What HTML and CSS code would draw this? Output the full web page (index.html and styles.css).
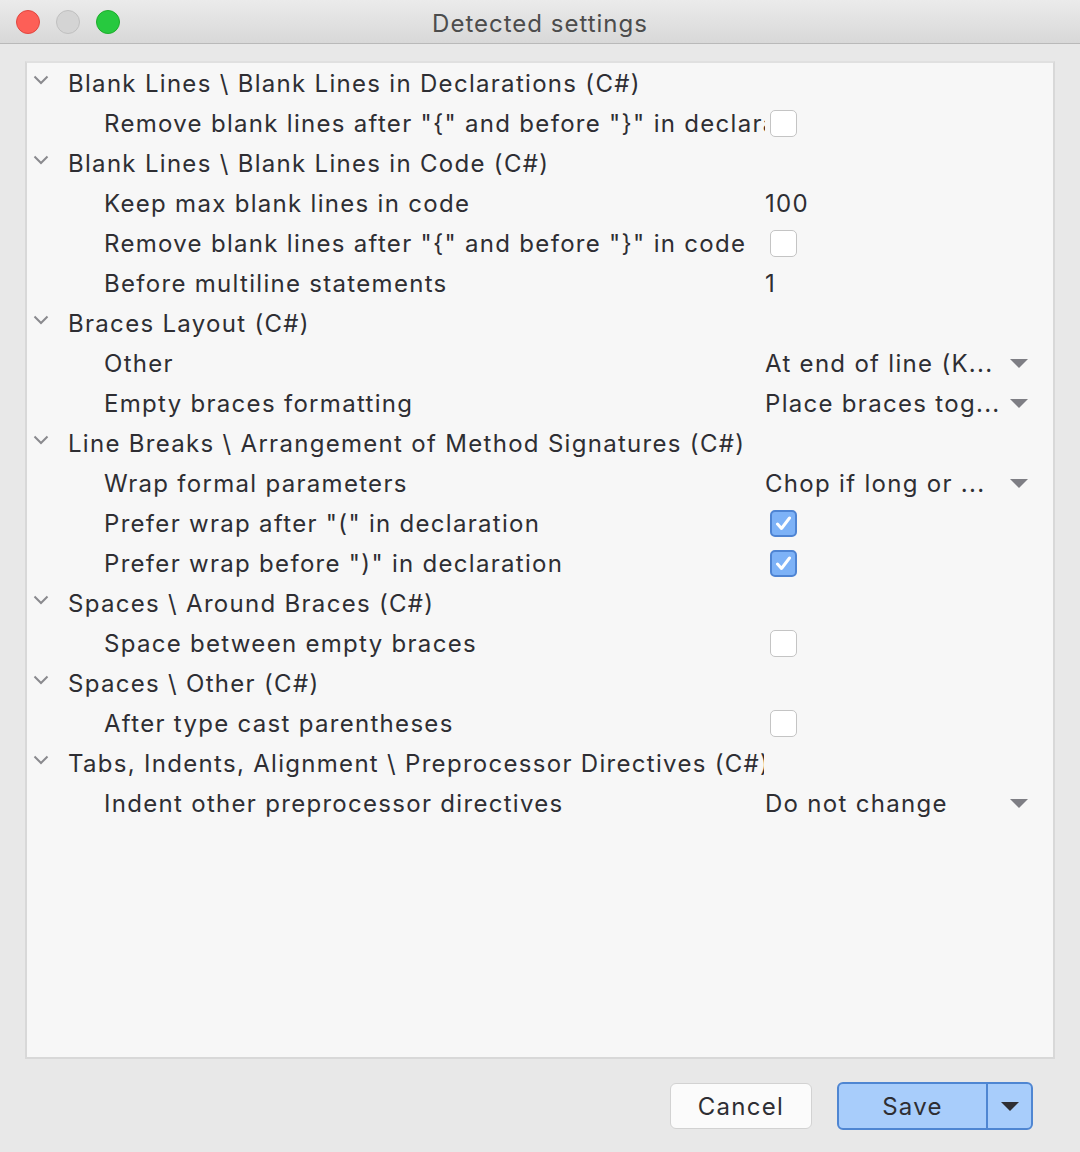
FILE: index.html
```html
<!DOCTYPE html>
<html>
<head>
<meta charset="utf-8">
<link rel="stylesheet" href="styles.css">
</head>
<body>
<div class="window">
  <div class="titlebar">
    <div class="lights">
      <span class="light red"></span>
      <span class="light gray"></span>
      <span class="light green"></span>
    </div>
    <div class="title">Detected settings</div>
  </div>
  <div class="content">
    <div class="panel">
      <div class="row group"><span class="chev"><svg width="16" height="10" viewBox="0 0 16 10"><path d="M1.5 1.5 L8 8 L14.5 1.5" fill="none" stroke="#8a8a8e" stroke-width="2"/></svg></span><span class="label">Blank Lines \ Blank Lines in Declarations (C#)</span></div>
      <div class="row item"><span class="label">Remove blank lines after "{" and before "}" in declarations</span><span class="value"><span class="cb"></span></span></div>

      <div class="row group"><span class="chev"><svg width="16" height="10" viewBox="0 0 16 10"><path d="M1.5 1.5 L8 8 L14.5 1.5" fill="none" stroke="#8a8a8e" stroke-width="2"/></svg></span><span class="label">Blank Lines \ Blank Lines in Code (C#)</span></div>
      <div class="row item"><span class="label">Keep max blank lines in code</span><span class="value">100</span></div>
      <div class="row item"><span class="label">Remove blank lines after "{" and before "}" in code</span><span class="value"><span class="cb"></span></span></div>
      <div class="row item"><span class="label">Before multiline statements</span><span class="value">1</span></div>

      <div class="row group"><span class="chev"><svg width="16" height="10" viewBox="0 0 16 10"><path d="M1.5 1.5 L8 8 L14.5 1.5" fill="none" stroke="#8a8a8e" stroke-width="2"/></svg></span><span class="label">Braces Layout (C#)</span></div>
      <div class="row item"><span class="label">Other</span><span class="value combo"><span class="ctext">At end of line (K...</span><span class="arrow"></span></span></div>
      <div class="row item"><span class="label">Empty braces formatting</span><span class="value combo"><span class="ctext">Place braces tog...</span><span class="arrow"></span></span></div>

      <div class="row group"><span class="chev"><svg width="16" height="10" viewBox="0 0 16 10"><path d="M1.5 1.5 L8 8 L14.5 1.5" fill="none" stroke="#8a8a8e" stroke-width="2"/></svg></span><span class="label">Line Breaks \ Arrangement of Method Signatures (C#)</span></div>
      <div class="row item"><span class="label">Wrap formal parameters</span><span class="value combo"><span class="ctext">Chop if long or ...</span><span class="arrow"></span></span></div>
      <div class="row item"><span class="label">Prefer wrap after "(" in declaration</span><span class="value"><span class="cb checked"><svg width="17" height="15" viewBox="0 0 17 15"><path d="M2.5 8 L6.5 12.5 L14.5 2" fill="none" stroke="#fff" stroke-width="3" stroke-linecap="round" stroke-linejoin="round"/></svg></span></span></div>
      <div class="row item"><span class="label">Prefer wrap before ")" in declaration</span><span class="value"><span class="cb checked"><svg width="17" height="15" viewBox="0 0 17 15"><path d="M2.5 8 L6.5 12.5 L14.5 2" fill="none" stroke="#fff" stroke-width="3" stroke-linecap="round" stroke-linejoin="round"/></svg></span></span></div>

      <div class="row group"><span class="chev"><svg width="16" height="10" viewBox="0 0 16 10"><path d="M1.5 1.5 L8 8 L14.5 1.5" fill="none" stroke="#8a8a8e" stroke-width="2"/></svg></span><span class="label">Spaces \ Around Braces (C#)</span></div>
      <div class="row item"><span class="label">Space between empty braces</span><span class="value"><span class="cb"></span></span></div>

      <div class="row group"><span class="chev"><svg width="16" height="10" viewBox="0 0 16 10"><path d="M1.5 1.5 L8 8 L14.5 1.5" fill="none" stroke="#8a8a8e" stroke-width="2"/></svg></span><span class="label">Spaces \ Other (C#)</span></div>
      <div class="row item"><span class="label">After type cast parentheses</span><span class="value"><span class="cb"></span></span></div>

      <div class="row group"><span class="chev"><svg width="16" height="10" viewBox="0 0 16 10"><path d="M1.5 1.5 L8 8 L14.5 1.5" fill="none" stroke="#8a8a8e" stroke-width="2"/></svg></span><span class="label">Tabs, Indents, Alignment \ Preprocessor Directives (C#)</span></div>
      <div class="row item"><span class="label">Indent other preprocessor directives</span><span class="value combo"><span class="ctext">Do not change</span><span class="arrow"></span></span></div>
    </div>
    <div class="buttons">
      <button class="btn cancel">Cancel</button>
      <div class="split">
        <button class="btn save">Save</button>
        <button class="btn drop"><span class="darrow"></span></button>
      </div>
    </div>
  </div>
</div>
</body>
</html>
```

FILE: styles.css
```css
* { box-sizing: border-box; }
html, body {
  margin: 0;
  padding: 0;
  background: #e8e8e8;
}
body {
  font-family: Inter, "Noto Sans", "Liberation Sans", sans-serif;
  color: #2e2e33;
}
.window {
  width: 1080px;
  height: 1152px;
  display: flex;
  flex-direction: column;
  background: #e8e8e8;
}
.titlebar {
  height: 44px;
  flex: none;
  position: relative;
  display: flex;
  align-items: center;
  justify-content: center;
  background: linear-gradient(#ebebeb, #d8d8d8);
  border-bottom: 1px solid #b9b9b9;
}
.lights {
  position: absolute;
  left: 16px;
  top: 10px;
  display: flex;
  gap: 16px;
}
.light {
  width: 24px;
  height: 24px;
  border-radius: 50%;
  display: block;
}
.red { background: #fd5f57; border: 1px solid #e1463f; }
.gray { background: #d4d4d4; border: 1px solid #c0c0c0; }
.green { background: #27c93f; border: 1px solid #1dad2b; }
.title {
  font-size: 24px;
  color: #4c4c4c;
  letter-spacing: 1px;
  position: relative;
  top: 2px;
}
.content {
  flex: 1;
  display: flex;
  flex-direction: column;
  padding: 17px 25px 0 25px;
}
.panel {
  height: 998px;
  background: #f7f7f7;
  border: 2px solid #d8d8d8;
  border-top-color: #e0e0e0;
  display: flex;
  flex-direction: column;
}
.row {
  height: 40px;
  flex: none;
  display: flex;
  align-items: center;
  font-size: 24px;
  letter-spacing: 1.3px;
  white-space: nowrap;
}
.group .chev {
  width: 16px;
  margin-left: 6px;
  margin-right: 19px;
  display: flex;
  align-items: center;
  position: relative;
  top: -3px;
}
.group .label {
  width: 696px;
  overflow: hidden;
}
.item .label {
  margin-left: 77px;
  width: 661px;
  overflow: hidden;
}
.value {
  display: flex;
  align-items: center;
  width: 263px;
}
.cb {
  width: 27px;
  height: 27px;
  margin-left: 5px;
  border: 1.5px solid #c4c4c4;
  border-radius: 5px;
  background: #fff;
  display: flex;
  align-items: center;
  justify-content: center;
}
.cb.checked {
  background: #7db2f7;
  border: 2px solid #4e84d3;
}
.combo {
  justify-content: space-between;
}
.ctext {
  overflow: hidden;
}
.arrow {
  flex: none;
  width: 0;
  height: 0;
  border-left: 9px solid transparent;
  border-right: 9px solid transparent;
  border-top: 9px solid #7e7e84;
}
.buttons {
  display: flex;
  justify-content: flex-end;
  align-items: center;
  gap: 25px;
  padding-top: 23px;
  padding-right: 22px;
}
.btn {
  font-family: inherit;
  font-size: 24px;
  letter-spacing: 1.3px;
  color: #2e2e33;
  margin: 0;
}
.cancel {
  width: 142px;
  height: 46px;
  background: #fbfbfb;
  border: 1px solid #d2d2d2;
  border-radius: 6px;
}
.split {
  display: flex;
  width: 196px;
  height: 48px;
  background: #a8cdfb;
  border: 2px solid #4f86d2;
  border-radius: 6px;
  overflow: hidden;
}
.save {
  width: 149px;
  height: 100%;
  background: transparent;
  border: none;
  border-right: 2px solid #4f86d2;
  padding: 0;
}
.drop {
  flex: 1;
  background: transparent;
  border: none;
  display: flex;
  align-items: center;
  justify-content: center;
  padding: 0;
}
.darrow {
  width: 0;
  height: 0;
  border-left: 9px solid transparent;
  border-right: 9px solid transparent;
  border-top: 9px solid #2e2e33;
}
```
